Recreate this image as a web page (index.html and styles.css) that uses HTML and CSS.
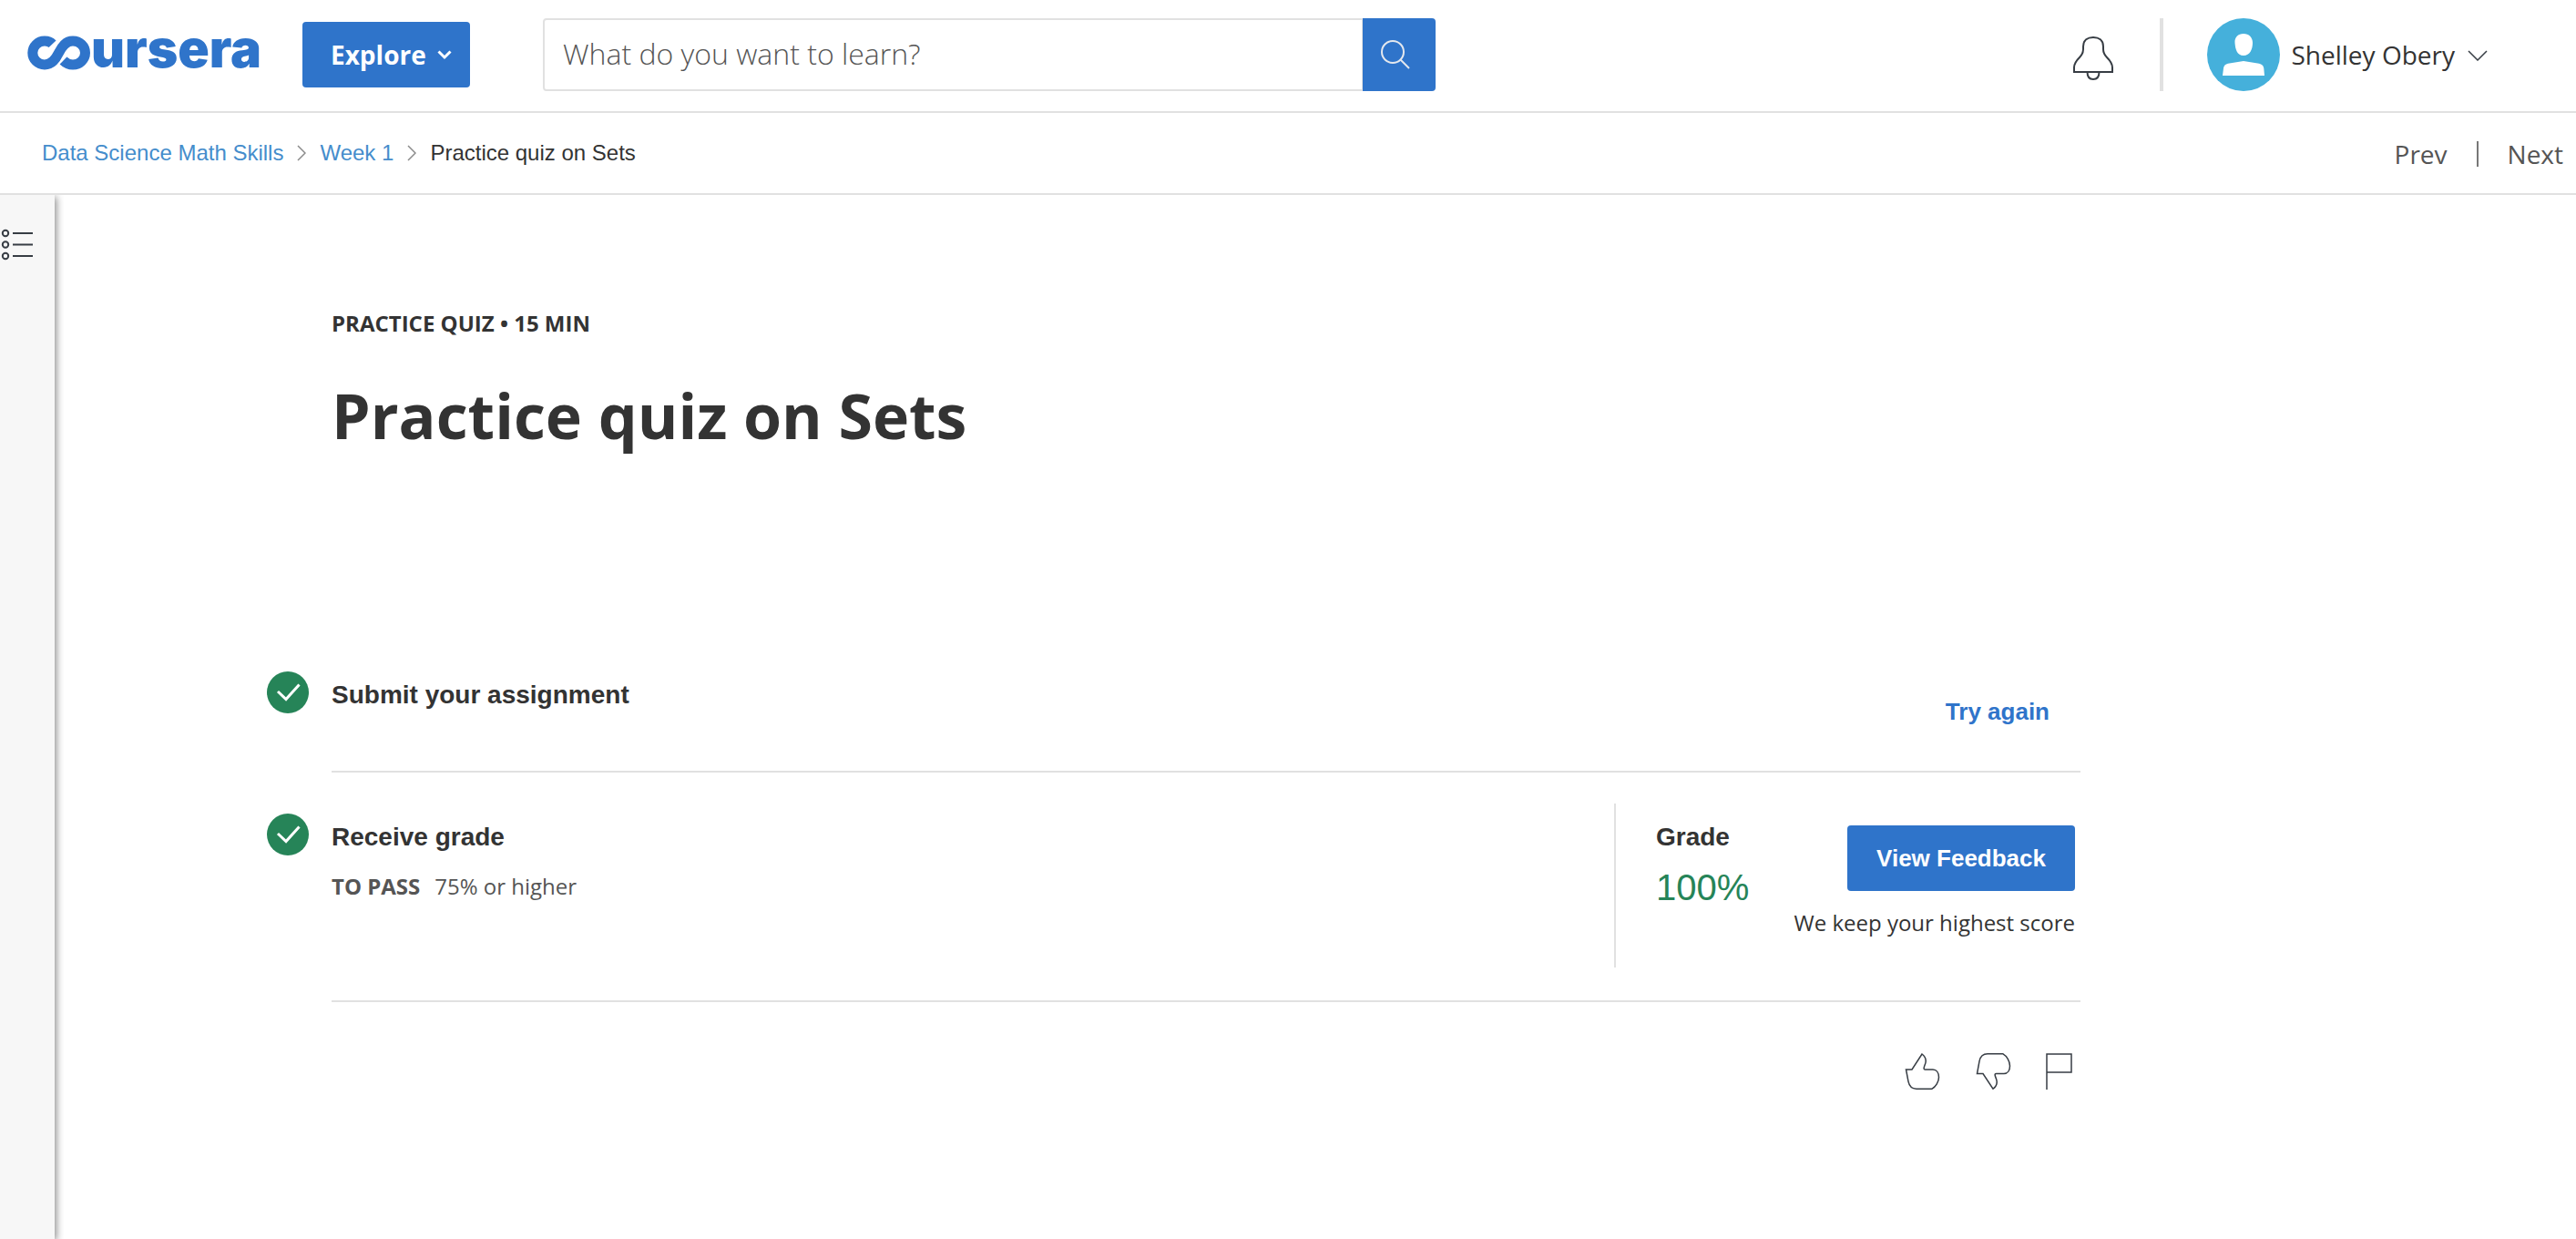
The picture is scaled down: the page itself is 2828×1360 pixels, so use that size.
FILE: index.html
```html
<!DOCTYPE html>
<html lang="en">
<head>
<meta charset="utf-8">
<meta name="viewport" content="width=device-width, initial-scale=1">
<title>Practice quiz on Sets | Coursera</title>
<link rel="stylesheet" href="styles.css">
</head>
<body>
<header class="topbar">
  <a class="logo" href="#" aria-label="Coursera">
    <svg class="logo-mark" width="70" height="38" viewBox="0 0 70 38" fill="none" stroke="currentColor" stroke-width="11" aria-hidden="true">
      <path d="M27.6 9.3C25.4 7 22.5 6 19 6A13.2 13 0 0 0 19 32C27 32 31 26 34.5 19C38 12 42 6 50 6A13.5 13 0 0 1 50 32C45.500 32 42.500 30.500 39.500 27.500"/>
    </svg>
    <span class="logo-text">ursera</span>
  </a>
  <button class="btn explore" type="button">Explore
    <svg width="16" height="12" viewBox="0 0 16 12" fill="none" stroke="currentColor" stroke-width="3" aria-hidden="true"><path d="M1.500 2.500L8 9l6.500-6.500"/></svg>
  </button>
  <form class="search" role="search">
    <input class="search-input" type="search" aria-label="Search courses" placeholder="What do you want to learn?">
    <button class="search-btn" type="button" aria-label="Search">
      <svg width="34" height="34" viewBox="0 0 34 34" fill="none" stroke="currentColor" stroke-width="2" aria-hidden="true"><circle cx="13" cy="14" r="12"/><path d="M21.500 22.500L31 32"/></svg>
    </button>
  </form>
  <div class="account">
    <button class="plain bell" type="button" aria-label="Notifications">
      <svg width="46" height="50" viewBox="0 0 46 50" fill="none" stroke="currentColor" stroke-width="2" aria-hidden="true"><path d="M2 40v-5c0-5 3-8 6-11 3-3 4-5 4-9v-3C12 5 17 2 23 2s11 3 11 10v3c0 4 1 6 4 9 3 3 6 6 6 11v5zM16.500 40c0 5 2.500 8 6.500 8s6.500-3 6.500-8"/></svg>
    </button>
    <button class="plain user" type="button">
      <svg width="80" height="80" viewBox="0 0 80 80" aria-hidden="true"><circle cx="40" cy="40" r="40" fill="#45b0db"/><path fill="#fff" d="M40 17c6 0 10 4 10 10 0 7-3 14-10 14s-9-7-9.500-14C30 21 34 17 40 17zM17 63l1-8c.4-3 2-4.500 5-5.200L40 47l17 2.800c3 .7 5 2.200 5.300 5.200L63 63z"/></svg>
      <span class="user-name">Shelley Obery</span>
      <svg width="22" height="13" viewBox="0 0 22 13" fill="none" stroke="currentColor" stroke-width="1.500" aria-hidden="true"><path d="M1 2l10 10L21 2"/></svg>
    </button>
  </div>
</header>

<div class="crumbbar">
  <nav class="crumbs" aria-label="Breadcrumb">
    <a href="#">Data Science Math Skills</a>
    <svg width="10" height="18" viewBox="0 0 10 18" fill="none" stroke="currentColor" stroke-width="1.500" aria-hidden="true"><path d="M1 1l8 8-8 8"/></svg>
    <a href="#">Week 1</a>
    <svg width="10" height="18" viewBox="0 0 10 18" fill="none" stroke="currentColor" stroke-width="1.500" aria-hidden="true"><path d="M1 1l8 8-8 8"/></svg>
    <span aria-current="page">Practice quiz on Sets</span>
  </nav>
  <nav class="pager" aria-label="Course items">
    <a href="#">Prev</a>
    <a class="pager-next" href="#">Next</a>
  </nav>
</div>

<div class="page">
  <aside class="rail">
    <button class="plain" type="button" aria-label="Open course outline">
      <svg width="36" height="36" viewBox="0 0 36 36" fill="none" stroke="currentColor" stroke-width="2" aria-hidden="true"><circle cx="6" cy="5" r="3.200"/><circle cx="6" cy="17.500" r="3.200"/><circle cx="6" cy="30" r="3.200"/><path d="M14 5h22M14 17.500h22M14 30h22"/></svg>
    </button>
  </aside>
  <main class="content">
    <div class="heading">
      <p class="kicker">PRACTICE QUIZ • 15 MIN</p>
      <h1 class="title">Practice quiz on Sets</h1>
    </div>

    <section class="step">
      <svg class="step-icon" width="46" height="46" viewBox="0 0 46 46" aria-hidden="true"><circle cx="23" cy="23" r="23" fill="#268458"/><path d="M12 22l9 8.500L35.500 14.500" fill="none" stroke="#fff" stroke-width="3"/></svg>
      <div class="step-body submit">
        <h2 class="label">Submit your assignment</h2>
        <button class="btn btn-text" type="button">Try again</button>
      </div>
    </section>

    <section class="step">
      <svg class="step-icon later" width="46" height="46" viewBox="0 0 46 46" aria-hidden="true"><circle cx="23" cy="23" r="23" fill="#268458"/><path d="M12 22l9 8.500L35.500 14.500" fill="none" stroke="#fff" stroke-width="3"/></svg>
      <div class="step-body receive">
        <div class="copy">
          <h2 class="label">Receive grade</h2>
          <p class="pass"><strong>TO PASS</strong><span>75% or higher</span></p>
        </div>
        <div class="grade">
          <div class="copy">
            <h3 class="label">Grade</h3>
            <p class="score">100%</p>
          </div>
          <div class="result">
            <button class="btn" type="button">View Feedback</button>
            <p class="note">We keep your highest score</p>
          </div>
        </div>
      </div>
    </section>

    <div class="feedback">
      <button class="plain" type="button" aria-label="Like">
        <svg width="40" height="40" viewBox="0 0 40 40" fill="none" stroke="currentColor" stroke-width="1.500" aria-hidden="true"><path d="M2.500 18H9L20 1c4 3 5 7 3.500 11-1 2.500-2.500 6 0 6H32c4 0 6.500 3.500 6.500 8.500S35 37 31 39.200H14c-5 0-8-3-9-8z"/></svg>
      </button>
      <button class="plain" type="button" aria-label="Dislike">
        <svg width="40" height="40" viewBox="0 0 40 40" fill="none" stroke="currentColor" stroke-width="1.500" aria-hidden="true"><path d="M2.500 22.500H9L20 39.200c4-3 5-7 3.500-11-1-2.500-2.500-5.700 0-5.700H32c4 0 6.500-3.500 6.500-8.500S35 3 31 .8H14c-5 0-8 3-9 8z"/></svg>
      </button>
      <button class="plain" type="button" aria-label="Report a problem">
        <svg width="32" height="40" viewBox="0 0 32 40" fill="none" stroke="currentColor" stroke-width="1.500" aria-hidden="true"><path d="M1 40V1h27v20H1"/></svg>
      </button>
    </div>
  </main>
</div>
</body>
</html>
```
FILE: styles.css
```css
:root {
  --blue: #2f74ca;
  --green: #268458;
  --line: #e1e1e1;
  --ink: #333;
  --sans: "Open Sans", "Noto Sans", sans-serif;
  --helv: "Liberation Sans", Arial, sans-serif;
}

* { box-sizing: border-box; }

body {
  margin: 0;
  min-height: 100vh;
  display: flex;
  flex-direction: column;
  background: #fff;
  color: var(--ink);
  font: 400 24px/32px var(--sans);
}

h1, h2, h3, p { margin: 0; }
a { text-decoration: none; }
svg { display: block; flex: none; }
button { font: inherit; cursor: pointer; }

.plain {
  padding: 0;
  border: 0;
  background: none;
  color: #373d44;
}

.btn {
  display: flex;
  align-items: center;
  justify-content: center;
  height: 72px;
  padding: 0 32px;
  border: 0;
  border-radius: 4px;
  background: var(--blue);
  color: #fff;
  font: 700 26px/32px var(--helv);
  white-space: nowrap;
}

.btn-text {
  padding: 0 28px;
  background: none;
  color: var(--blue);
}

/* top bar */
.topbar {
  display: flex;
  align-items: flex-start;
  padding: 20px 97px 22px 30px;
  border-bottom: 2px solid var(--line);
}

.logo {
  display: flex;
  align-items: center;
  width: 302px;
  height: 76px;
  color: var(--blue);
}

.logo-text {
  height: 76px;
  font: 900 57px/68px Inter, sans-serif;
}

.explore {
  justify-content: flex-start;
  width: 184px;
  margin-top: 4px;
  gap: 12px;
  padding: 0 0 0 31px;
  font: 700 28px/36px var(--sans);
}

.search {
  display: flex;
  flex: 0 1 980px;
  height: 80px;
  margin-left: 80px;
}

.search-input {
  flex: 1;
  min-width: 0;
  padding: 0 20px 2px;
  border: 2px solid var(--line);
  border-right-width: 1px;
  border-radius: 4px 0 0 4px;
  outline: 0;
  background: #fff;
  color: var(--ink);
  font: 300 32px/40px var(--sans);
}

.search-input::placeholder { color: #555; opacity: 1; }

.search-btn {
  display: flex;
  align-items: center;
  width: 80px;
  padding: 0 20px;
  border: 0;
  border-radius: 0 4px 4px 0;
  background: var(--blue);
  color: #e4e8ee;
}

.account {
  display: flex;
  margin-left: auto;
}

.bell {
  height: 80px;
  padding: 8px 50px 0 0;
  border-right: 4px solid var(--line);
}

.user {
  display: flex;
  align-items: center;
  margin-left: 48px;
  font: 400 28px/36px var(--sans);
}

.user-name {
  margin: 0 14px 0 12px;
  color: var(--ink);
  white-space: nowrap;
}

/* breadcrumb bar */
.crumbbar {
  display: flex;
  align-items: center;
  justify-content: space-between;
  height: 90px;
  padding: 0 14px 0 46px;
  border-bottom: 2px solid var(--line);
}

.crumbs {
  display: flex;
  align-items: center;
  gap: 15px;
  color: #8a8a8a;
  font-family: var(--helv);
}

.crumbs a { color: #458dcc; }
.crumbs span { color: var(--ink); }

.pager {
  display: flex;
  align-items: center;
  padding-top: 2px;
  font-size: 28px;
  line-height: 28px;
}

.pager a { color: #555; }

.pager-next {
  margin-left: 32px;
  padding-left: 32px;
  border-left: 2px solid #777;
}

/* page */
.page {
  display: flex;
  flex: 1;
}

.rail {
  width: 60px;
  padding-top: 37px;
  background: #f7f7f7;
  box-shadow: 2px 2px 8px rgba(0, 0, 0, 0.45);
  clip-path: inset(0 -10px 0 0);
}

.content {
  flex: 0 1 2224px;
  padding: 125px 0 60px 233px;
}

.heading {
  padding-left: 71px;
  margin-bottom: 235px;
}

.kicker { font-weight: 700; }

.title {
  margin-top: 39px;
  font: 700 68px/92px var(--sans);
}

.step {
  display: grid;
  grid-template-columns: 46px 1fr;
  column-gap: 25px;
}

.later { margin-top: 45px; }

.step-body {
  display: flex;
  align-items: flex-start;
  justify-content: space-between;
  border-bottom: 2px solid var(--line);
}

.submit { padding: 8px 6px 29px 0; }
.receive { padding: 34px 0 36px; }

.label { font: 700 28px/36px var(--helv); }

.copy { padding-top: 19px; }

.pass {
  display: flex;
  gap: 16px;
  margin-top: 20px;
  color: #555;
}

.grade {
  display: flex;
  justify-content: space-between;
  width: 512px;
  height: 180px;
  padding: 0 6px 0 44px;
  border-left: 2px solid var(--line);
}

.score {
  margin-top: 13px;
  color: var(--green);
  font: 400 40px/48px var(--helv);
}

.result {
  display: flex;
  flex-direction: column;
  align-items: flex-end;
  gap: 19px;
  padding-top: 24px;
}

.feedback {
  display: flex;
  justify-content: flex-end;
  gap: 38px;
  padding: 56px 6px 0 0;
}
```
